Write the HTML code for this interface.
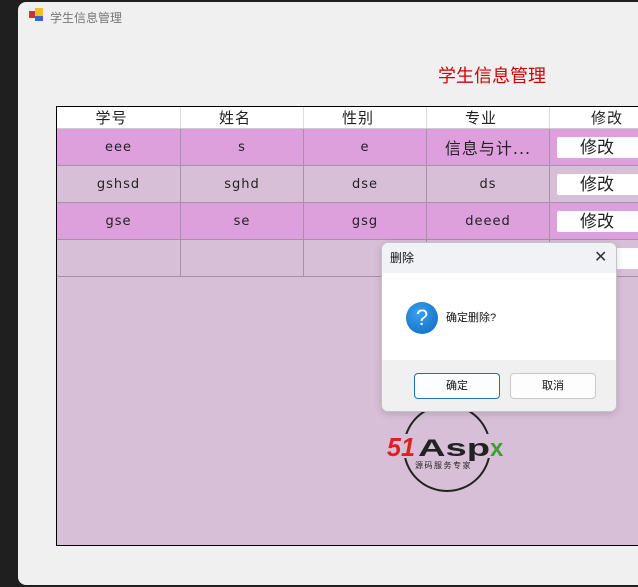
<!DOCTYPE html>
<html><head><meta charset="utf-8"><style>
*{margin:0;padding:0;box-sizing:border-box}
body{width:638px;height:587px;background:#1f1f1f;position:relative;overflow:hidden;font-family:"Liberation Sans","Noto Sans CJK SC",sans-serif}
.win{position:absolute;left:18px;top:2px;width:640px;height:583px;background:#f0f0f0;border-radius:8px 0 0 8px}
.t{position:absolute;white-space:nowrap}
.tbl{position:absolute;left:56px;top:106px;width:600px;height:440px;background:#d8bfd8;border:1px solid #000}
.row{position:absolute;left:0;width:600px;height:37px;border-bottom:1px solid #a890a8}
.c{position:absolute;top:0;height:100%;border-right:1px solid #a890a8;text-align:center;font-size:13px;letter-spacing:1px;color:#222;display:flex;align-items:center;justify-content:center;font-family:"DejaVu Sans","Noto Sans CJK SC",sans-serif}
.btn{position:absolute;left:500px;width:100px;height:21px;background:#fff;border-radius:2px;font-size:17px;text-align:center;line-height:21px;padding-right:20px;color:#222}
.dlg{position:absolute;left:381px;top:242px;width:236px;height:170px;background:#fff;border:1px solid #c8c0c8;border-radius:7px;overflow:hidden;box-shadow:0 2px 8px rgba(0,0,0,.15)}
.db{position:absolute;top:130px;width:86px;height:26px;border:1px solid #c8c8c8;border-radius:4px;background:#fdfdfd;font-size:11px;text-align:center;line-height:24px;color:#111}
</style></head><body>
<div class="win">
 <div style="position:absolute;left:11px;top:9px;width:7px;height:7px;background:#c33"></div>
 <div style="position:absolute;left:17px;top:6px;width:8px;height:8px;background:#f0c020"></div>
 <div style="position:absolute;left:17px;top:14px;width:8px;height:5px;background:#4060d0"></div>
 <div class="t" style="left:32px;top:7px;font-size:12px;color:#777">学生信息管理</div>
 <div class="t" style="left:420px;top:60px;font-size:18px;color:#d00000;font-family:'Noto Sans CJK SC',sans-serif">学生信息管理</div>
</div>
<div class="tbl">
 <div class="row" style="top:0;height:22px;background:#fff;border-bottom:1px solid #ccc">
  <div class="c" style="left:0;width:124px;border-color:#ddd;font-size:15px;padding-right:14px">学号</div>
  <div class="c" style="left:124px;width:123px;border-color:#ddd;font-size:15px;padding-right:14px">姓名</div>
  <div class="c" style="left:247px;width:123px;border-color:#ddd;font-size:15px;padding-right:14px">性别</div>
  <div class="c" style="left:370px;width:123px;border-color:#ddd;font-size:15px;padding-right:14px">专业</div>
  <div class="c" style="left:493px;width:124px;border:0;font-size:15px;padding-right:10px">修改</div>
 </div>
 <div class="row" style="top:22px;background:#dda0dd">
  <div class="c" style="left:0;width:124px">eee</div><div class="c" style="left:124px;width:123px">s</div><div class="c" style="left:247px;width:123px">e</div><div class="c" style="left:370px;width:123px;font-size:16px">信息与计...</div>
  <div class="btn" style="top:8px">修改</div></div>
 <div class="row" style="top:59px;background:#d8bfd8">
  <div class="c" style="left:0;width:124px">gshsd</div><div class="c" style="left:124px;width:123px">sghd</div><div class="c" style="left:247px;width:123px">dse</div><div class="c" style="left:370px;width:123px">ds</div>
  <div class="btn" style="top:8px">修改</div></div>
 <div class="row" style="top:96px;background:#dda0dd">
  <div class="c" style="left:0;width:124px">gse</div><div class="c" style="left:124px;width:123px">se</div><div class="c" style="left:247px;width:123px">gsg</div><div class="c" style="left:370px;width:123px">deeed</div>
  <div class="btn" style="top:8px">修改</div></div>
 <div class="row" style="top:133px;background:#d8bfd8">
  <div class="c" style="left:0;width:124px"></div><div class="c" style="left:124px;width:123px"></div><div class="c" style="left:247px;width:123px"></div><div class="c" style="left:370px;width:123px"></div>
  <div class="btn" style="top:8px"></div></div>
</div>
<svg style="position:absolute;left:385px;top:400px" width="130" height="96">
 <circle cx="62" cy="48" r="43" fill="none" stroke="#222" stroke-width="2"/>
 <rect x="0" y="34" width="130" height="24" fill="#d8bfd8"/>
 <text x="2" y="56" font-family="Liberation Sans" font-style="italic" font-weight="bold" font-size="26" fill="#e02020" textLength="28" lengthAdjust="spacingAndGlyphs">51</text>
 <text x="33" y="56" font-family="Liberation Sans" font-weight="bold" font-size="24" fill="#222" textLength="72" lengthAdjust="spacingAndGlyphs">Asp</text>
 <text x="105" y="56" font-family="Liberation Sans" font-weight="bold" font-size="24" fill="#3aa030">x</text>
 <text x="30" y="68" font-family="Noto Sans CJK SC" font-size="8" fill="#222" letter-spacing="1.5">源码服务专家</text>
</svg>
<div class="dlg">
 <div style="position:absolute;left:0;top:0;width:100%;height:30px;background:#f0f2f5"></div>
 <div class="t" style="left:8px;top:6px;font-size:12px;color:#111">删除</div>
 <div class="t" style="left:212px;top:4px;font-size:16px;color:#333">✕</div>
 <div style="position:absolute;left:24px;top:59px;width:32px;height:32px;border-radius:50%;background:radial-gradient(circle at 40% 35%,#3aa0ee,#0a68c0);color:#fff;font-size:22px;text-align:center;line-height:32px">?</div>
 <div class="t" style="left:64px;top:66px;font-size:11px;color:#111">确定删除?</div>
 <div style="position:absolute;left:0;top:117px;width:100%;height:53px;background:#f0f0f0"></div>
 <div class="db" style="left:32px;border:1px solid #1a6fc0">确定</div>
 <div class="db" style="left:128px">取消</div>
</div>
</body></html>
